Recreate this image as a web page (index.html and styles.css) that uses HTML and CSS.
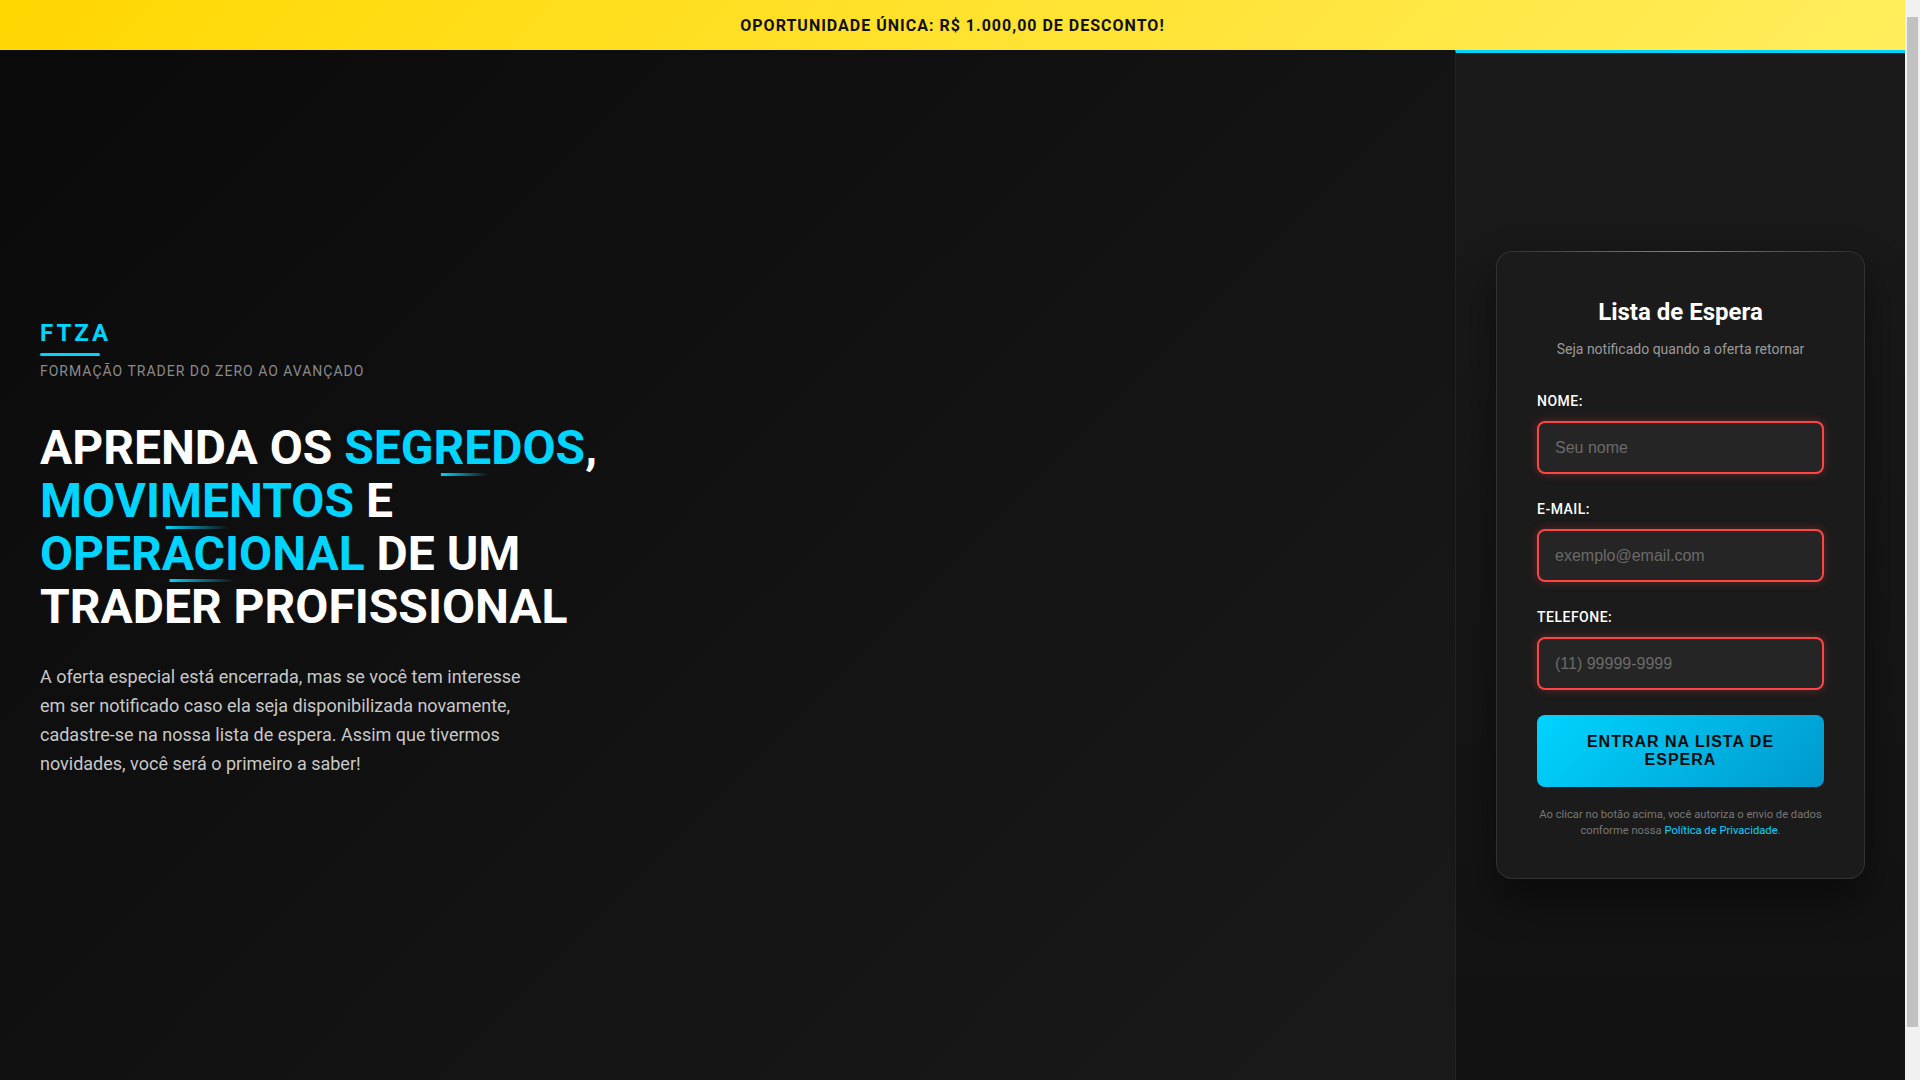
FILE: index.html
```html
<!DOCTYPE html>
<html lang="pt-BR">
<head>
<meta charset="utf-8">
<title>FTZA - Lista de Espera</title>
<link rel="stylesheet" href="styles.css">
</head>
<body>
  <div class="topbar">OPORTUNIDADE ÚNICA: R$ 1.000,00 DE DESCONTO!</div>
  <main class="layout">
    <section class="hero">
      <div class="hero-inner">
        <div class="logo">FTZA</div>
        <div class="tagline">FORMAÇÃO TRADER DO ZERO AO AVANÇADO</div>
        <h1 class="headline">APRENDA OS <span class="hl">SEGREDOS</span>, <span class="hl">MOVIMENTOS</span> E <span class="hl">OPERACIONAL</span> DE UM TRADER PROFISSIONAL</h1>
        <p class="intro">A oferta especial está encerrada, mas se você tem interesse em ser notificado caso ela seja disponibilizada novamente, cadastre-se na nossa lista de espera. Assim que tivermos novidades, você será o primeiro a saber!</p>
      </div>
    </section>
    <aside class="panel">
      <div class="card">
        <h2 class="card-title">Lista de Espera</h2>
        <p class="card-sub">Seja notificado quando a oferta retornar</p>
        <form class="form">
          <div class="field">
            <label class="label" for="nome">NOME:</label>
            <input class="input" id="nome" type="text" placeholder="Seu nome">
          </div>
          <div class="field">
            <label class="label" for="email">E-MAIL:</label>
            <input class="input" id="email" type="email" placeholder="exemplo@email.com">
          </div>
          <div class="field">
            <label class="label" for="tel">TELEFONE:</label>
            <input class="input" id="tel" type="tel" placeholder="(11) 99999-9999">
          </div>
          <button class="btn" type="button">ENTRAR NA LISTA DE ESPERA</button>
          <p class="disclaimer">Ao clicar no botão acima, você autoriza o envio de dados conforme nossa <a href="#" class="link">Política de Privacidade</a>.</p>
        </form>
      </div>
    </aside>
  </main>
</body>
</html>
```

FILE: styles.css
```css
* { box-sizing: border-box; }

/* right-hand gutter drawn like the browser's scrollbar track */
html {
  margin: 0;
  padding: 0;
  background-color: #f1f1f1;
  background-image: linear-gradient(#c1c1c1, #c1c1c1);
  background-repeat: no-repeat;
  background-size: 11px 1010px;
  background-position: right 2px top 17px;
  background-attachment: fixed;
}

body {
  margin: 0 15px 0 0;
  padding: 0;
  font-family: Roboto, "Noto Sans", "Liberation Sans", sans-serif;
  background: #0d0d0d;
  color: #fff;
}

.topbar {
  height: 50px;
  display: flex;
  align-items: center;
  justify-content: center;
  background: linear-gradient(135deg, #ffd700 0%, #ffed5c 100%);
  color: #111;
  font-weight: 700;
  font-size: 16px;
  letter-spacing: 1px;
}

.layout {
  display: grid;
  grid-template-columns: 1fr 450px;
  min-height: 100vh;
}

.hero {
  display: flex;
  flex-direction: column;
  justify-content: center;
  padding: 0 40px 82px;
  background: linear-gradient(135deg, #0a0a0a 0%, #1a1a1a 100%);
}

.logo {
  position: relative;
  display: inline-block;
  align-self: flex-start;
  font-size: 24px;
  line-height: 28.8px;
  font-weight: 700;
  letter-spacing: 3px;
  color: #00d4ff;
  padding-bottom: 8px;
}

.logo::after {
  content: "";
  position: absolute;
  left: 0;
  bottom: 0;
  width: 60px;
  height: 3px;
  border-radius: 2px;
  background: #00d4ff;
}

.tagline {
  margin-top: 5px;
  font-size: 14px;
  line-height: 21px;
  letter-spacing: 1px;
  color: #8a8a8a;
}

.headline {
  margin: 40px 0 30px;
  font-size: 48px;
  line-height: 1.1;
  font-weight: 700;
  color: #fff;
  max-width: 600px;
}

.hl {
  position: relative;
  color: #00d4ff;
}

.hl::after {
  content: "";
  position: absolute;
  left: 50%;
  bottom: 0;
  width: 20%;
  height: 3px;
  transform: translateX(-50%);
  background: linear-gradient(90deg, #00d4ff, transparent);
}

.intro {
  margin: 0;
  max-width: 500px;
  font-size: 18px;
  line-height: 1.6;
  color: #c8c8c8;
}

.panel {
  display: flex;
  flex-direction: column;
  justify-content: center;
  padding: 40px 40px 93px;
  border-top: 3px solid #00d4ff;
  border-left: 1px solid #222;
  background: linear-gradient(180deg, #1a1a1a 0%, #111 100%);
}

.card {
  position: relative;
  background: #1b1b1b;
  border: 1px solid rgba(255, 255, 255, 0.1);
  border-radius: 16px;
  padding: 46px 40px 40px;
  box-shadow: 0 20px 40px rgba(0, 0, 0, 0.45);
}

.card::before {
  content: "";
  position: absolute;
  top: -1px;
  left: 16px;
  right: 16px;
  height: 1px;
  background: linear-gradient(90deg, transparent, rgba(0, 212, 255, 0.8), transparent);
}

.card-title {
  margin: 0 0 11px;
  text-align: center;
  font-size: 24px;
  line-height: 1.2;
  font-weight: 700;
  color: #fff;
}

.card-sub {
  margin: 0 0 31px;
  text-align: center;
  font-size: 14px;
  line-height: 1.6;
  color: #9a9a9a;
}

.form {
  margin: 0;
}

.field {
  margin-bottom: 25px;
}

.label {
  display: block;
  margin-bottom: 9px;
  font-size: 14px;
  line-height: 21px;
  font-weight: 500;
  letter-spacing: 0.5px;
  color: #fff;
}

.input {
  display: block;
  width: 100%;
  padding: 15px 16px;
  font-family: "Liberation Sans", Arial, sans-serif;
  font-size: 16px;
  line-height: 19px;
  color: #fff;
  background: #252525;
  border: 2px solid #ff4444;
  border-radius: 8px;
  box-shadow: 0 0 10px rgba(255, 68, 68, 0.3);
  outline: none;
}

.input::placeholder {
  color: #6a6a6a;
}

.btn {
  display: block;
  width: 100%;
  padding: 18px 30px;
  font-family: "Liberation Sans", Arial, sans-serif;
  font-size: 16px;
  line-height: 18px;
  font-weight: 700;
  letter-spacing: 1px;
  color: #0a0a0a;
  background: linear-gradient(135deg, #00d4ff 0%, #0099cc 100%);
  border: none;
  border-radius: 8px;
  cursor: pointer;
}

.disclaimer {
  margin: 20px 0 0;
  text-align: center;
  font-size: 11.2px;
  line-height: 1.4;
  color: #777;
}

.link {
  color: #00d4ff;
  text-decoration: none;
}
```
